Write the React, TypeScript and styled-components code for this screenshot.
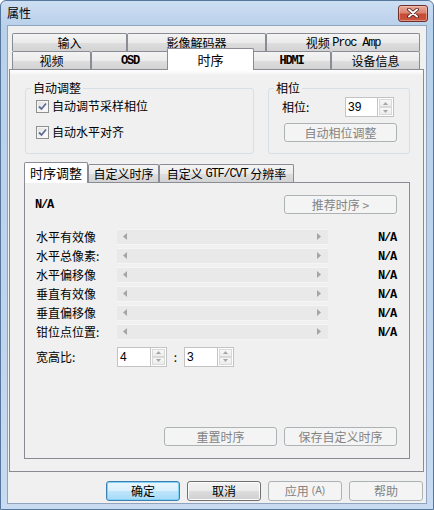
import React from 'react';
import styled, { createGlobalStyle } from 'styled-components';

const GlobalStyle = createGlobalStyle`
  html, body {
    margin: 0;
    padding: 0;
    background: #ffffff;
  }
  body {
    font-family: "Noto Sans CJK SC", "Liberation Sans", sans-serif;
    font-size: 12px;
    line-height: 14px;
    color: #000;
  }
`;

const Frame = styled.div`
  width: 434px;
  height: 510px;
  box-sizing: border-box;
  display: flex;
  flex-direction: column;
  border: 1px solid #56779d;
  border-radius: 6px 6px 0 0;
  background: linear-gradient(180deg, #cddef2 0px, #bad1ea 24px, #bed4ec 60%, #c8dbf0 100%);
  padding: 0 6px 5px;
`;

const TitleBar = styled.div`
  height: 24px;
  display: flex;
  align-items: center;
  justify-content: space-between;
  margin-right: -1px;
`;

const Title = styled.span`
  font-size: 12px;
  color: #000;
`;

const CloseButton = styled.div`
  width: 30px;
  height: 17px;
  box-sizing: border-box;
  border: 1px solid #6d2f28;
  border-radius: 3px;
  background: linear-gradient(180deg, #e8a798 0%, #d98572 45%, #c84b35 55%, #c8543c 100%);
  box-shadow: inset 0 0 0 1px rgba(255, 220, 210, 0.45);
  display: flex;
  align-items: center;
  justify-content: center;
`;

const Body = styled.div`
  flex: 1;
  display: flex;
  flex-direction: column;
  background: #f0f0f0;
  border: 1px solid #8ea4bf;
  padding: 7px 2px 0 1px;
`;

const TabStrip = styled.div`
  display: flex;
  flex-direction: column;
  padding: 0 3px;
`;

const TabRow = styled.div`
  display: flex;
  height: 18px;
`;

const Tab = styled.div<{ $w: number; $active?: boolean }>`
  position: relative;
  box-sizing: border-box;
  width: ${p => (p.$active ? p.$w + 4 : p.$w)}px;
  height: ${p => (p.$active ? 22 : 18)}px;
  margin: ${p => (p.$active ? '-3px -2px -1px -2px' : '0')};
  z-index: ${p => (p.$active ? 2 : 0)};
  border: 1px solid #898c95;
  border-bottom: none;
  border-radius: 2px 2px 0 0;
  background: ${p =>
    p.$active
      ? '#ffffff'
      : 'linear-gradient(180deg, #f4f4f4 0%, #ebebeb 50%, #dedede 51%, #d3d3d3 100%)'};
  display: flex;
  align-items: center;
  justify-content: center;
  white-space: nowrap;
  font-size: ${p => (p.$active ? 13 : 12)}px;
`;

const Mono = styled.span<{ $bold?: boolean }>`
  font-family: "Liberation Mono", "DejaVu Sans Mono", monospace;
  font-size: 12px;
  letter-spacing: -1.2px;
  font-weight: ${p => (p.$bold ? 700 : 400)};
`;

const Panel = styled.div`
  height: 403px;
  box-sizing: border-box;
  display: flex;
  flex-direction: column;
  border: 1px solid #898c95;
  background: linear-gradient(180deg, #ffffff 0px, #f8f8f8 3px, #f0f0f0 5px);
  padding: 0 13px 12px 14px;
`;

const GroupRow = styled.div`
  display: flex;
  gap: 14px;
  margin: 11px 0 0 1px;
`;

const Group = styled.fieldset<{ $w?: number }>`
  box-sizing: border-box;
  margin: 0;
  padding: 0;
  min-width: 0;
  height: 73px;
  ${p => (p.$w ? `width: ${p.$w}px;` : 'flex: 1;')}
  border: 1px solid #d5dfe5;
  border-radius: 3px;
`;

const Legend = styled.legend`
  margin-left: 5px;
  padding: 0 2px;
  line-height: 14px;
  font-size: 12px;
`;

const GroupBody = styled.div<{ $pl: number; $gap: number }>`
  display: flex;
  flex-direction: column;
  gap: ${p => p.$gap}px;
  padding: 2px 0 0 ${p => p.$pl}px;
`;

const CheckRow = styled.label`
  display: flex;
  align-items: center;
  gap: 3px;
  height: 18px;
`;

const CheckBox = styled.span`
  box-sizing: border-box;
  width: 13px;
  height: 13px;
  border: 1px solid #8e8f8f;
  background: linear-gradient(135deg, #dedede 0%, #f4f4f4 60%, #ffffff 100%);
  box-shadow: inset 0 0 0 1px #f5f5f5;
  display: flex;
  align-items: center;
  justify-content: center;
`;

const PhaseRow = styled.div`
  display: flex;
  align-items: center;
  height: 20px;
`;

const FieldLabel = styled.span<{ $w: number }>`
  width: ${p => p.$w}px;
  flex: none;
  white-space: nowrap;
`;

const Spin = styled.div<{ $w: number }>`
  display: flex;
  width: ${p => p.$w}px;
  height: 20px;
  flex: none;
`;

const SpinInput = styled.div`
  flex: 1;
  box-sizing: border-box;
  border: 1px solid #c3c3c3;
  border-right: none;
  background: #ffffff;
  padding: 2px 0 0 2px;
  font-family: "Liberation Sans", Arial, sans-serif;
  font-size: 12px;
`;

const SpinArrows = styled.div`
  width: 17px;
  display: flex;
  flex-direction: column;
  box-sizing: border-box;
  border: 1px solid #c3c3c3;
  background: #ffffff;
  padding: 1px;
`;

const SpinArrow = styled.div`
  flex: 1;
  box-sizing: border-box;
  border: 1px solid #d9d9d9;
  background: linear-gradient(180deg, #f7f7f7, #ececec);
  display: flex;
  align-items: center;
  justify-content: center;
`;

const Button = styled.div<{ $w: number; $h: number; $kind?: 'default' | 'normal' | 'disabled'; $ml?: number }>`
  box-sizing: border-box;
  width: ${p => p.$w}px;
  height: ${p => p.$h}px;
  margin-left: ${p => p.$ml ?? 0}px;
  flex: none;
  border-radius: 3px;
  display: flex;
  align-items: center;
  justify-content: center;
  white-space: nowrap;
  ${p =>
    p.$kind === 'default'
      ? `border: 1px solid #3c7fb1;
         background: linear-gradient(180deg, #eaf6fd 0%, #d9f0fc 50%, #bee6fd 51%, #a7d9f5 100%);
         box-shadow: inset 0 0 0 1px #7fd3f7;
         color: #000;`
      : p.$kind === 'normal'
      ? `border: 1px solid #707070;
         background: linear-gradient(180deg, #f2f2f2 0%, #ebebeb 50%, #dddddd 51%, #cfcfcf 100%);
         box-shadow: inset 0 0 0 1px #fcfcfc;
         color: #000;`
      : `border: 1px solid #adb2b5;
         background: #f4f4f4;
         color: #838383;`}
`;

const Small = styled.span`
  font-family: "Liberation Sans", Arial, sans-serif;
  font-size: 10px;
  margin-left: 3px;
`;

const SubTabRow = styled.div`
  display: flex;
  height: 18px;
  margin-top: 10px;
`;

const SubTab = styled.div<{ $w: number; $active?: boolean }>`
  position: relative;
  box-sizing: border-box;
  width: ${p => p.$w}px;
  height: ${p => (p.$active ? 21 : 18)}px;
  margin-top: ${p => (p.$active ? -2 : 0)}px;
  z-index: ${p => (p.$active ? 2 : 0)};
  border: 1px solid #898c95;
  border-bottom: none;
  border-radius: 2px 2px 0 0;
  background: ${p =>
    p.$active
      ? '#ffffff'
      : 'linear-gradient(180deg, #f4f4f4 0%, #ebebeb 50%, #dedede 51%, #d3d3d3 100%)'};
  display: flex;
  align-items: center;
  justify-content: center;
  white-space: nowrap;
  font-size: ${p => (p.$active ? 13 : 12)}px;
`;

const SubPanel = styled.div`
  height: 277px;
  box-sizing: border-box;
  display: flex;
  flex-direction: column;
  border: 1px solid #898c95;
  background: #f0f0f0;
  padding: 12px 12px 12px 10px;
`;

const InfoRow = styled.div`
  display: flex;
  align-items: center;
  justify-content: space-between;
  height: 19px;
`;

const SliderList = styled.div`
  display: flex;
  flex-direction: column;
  margin-top: 13px;
`;

const SliderRow = styled.div`
  display: grid;
  grid-template-columns: 81px 211px 1fr;
  align-items: center;
  height: 19px;
  padding: 0 1px;
`;

const Track = styled.div`
  height: 16px;
  box-sizing: border-box;
  background: #e9e9e9;
  border-top: 1px solid #f5f5f5;
  border-bottom: 1px solid #f5f5f5;
  display: flex;
  align-items: center;
  justify-content: space-between;
  padding: 0 7px 0 6px;
`;

const Value = styled.span`
  justify-self: end;
`;

const AspectRow = styled.div`
  display: flex;
  align-items: center;
  height: 21px;
  margin-top: 5px;
  padding-left: 1px;
`;

const Colon = styled.span`
  width: 17px;
  text-align: center;
  flex: none;
`;

const SubButtons = styled.div`
  display: flex;
  justify-content: flex-end;
  gap: 7px;
  margin-top: auto;
`;

const ButtonBar = styled.div`
  display: flex;
  justify-content: flex-end;
  gap: 7px;
  margin-top: 9px;
  padding-right: 1px;
`;

const Check = () => (
  <svg width="9" height="9" viewBox="0 0 9 9">
    <path d="M1 4.5 L3.5 7 L8 1.5" fill="none" stroke="#5d6f92" strokeWidth="1.8" />
  </svg>
);

const Tri = ({ dir }: { dir: 'up' | 'down' | 'left' | 'right' }) => {
  const d = {
    up: 'M0 3 L2.5 0 L5 3 Z',
    down: 'M0 0 L2.5 3 L5 0 Z',
    left: 'M4 0 L0 3.5 L4 7 Z',
    right: 'M0 0 L4 3.5 L0 7 Z',
  }[dir];
  const vertical = dir === 'up' || dir === 'down';
  return (
    <svg width={vertical ? 5 : 4} height={vertical ? 3 : 7} viewBox={vertical ? '0 0 5 3' : '0 0 4 7'}>
      <path d={d} fill="#a5a5a5" />
    </svg>
  );
};

const SpinBox = ({ value, width }: { value: string; width: number }) => (
  <Spin $w={width}>
    <SpinInput>{value}</SpinInput>
    <SpinArrows>
      <SpinArrow>
        <Tri dir="up" />
      </SpinArrow>
      <SpinArrow>
        <Tri dir="down" />
      </SpinArrow>
    </SpinArrows>
  </Spin>
);

const sliders = ['水平有效像', '水平总像素:', '水平偏移像', '垂直有效像', '垂直偏移像', '钳位点位置:'];

export default function App() {
  return (
    <>
      <GlobalStyle />
      <Frame>
        <TitleBar>
          <Title>属性</Title>
          <CloseButton>
            <svg width="12" height="10" viewBox="0 0 12 10">
              <path d="M2 1.5 L10 8.5 M10 1.5 L2 8.5" stroke="#4a1a14" strokeWidth="3.6" strokeLinecap="round" />
              <path d="M2 1.5 L10 8.5 M10 1.5 L2 8.5" stroke="#ffffff" strokeWidth="2" strokeLinecap="round" />
            </svg>
          </CloseButton>
        </TitleBar>
        <Body>
          <TabStrip>
            <TabRow>
              <Tab $w={115}>输入</Tab>
              <Tab $w={139}>影像解码器</Tab>
              <Tab $w={154}>
                视频&nbsp;<Mono>Proc Amp</Mono>
              </Tab>
            </TabRow>
            <TabRow>
              <Tab $w={79}>视频</Tab>
              <Tab $w={78}>
                <Mono $bold>OSD</Mono>
              </Tab>
              <Tab $w={83} $active>
                时序
              </Tab>
              <Tab $w={79}>
                <Mono $bold>HDMI</Mono>
              </Tab>
              <Tab $w={89}>设备信息</Tab>
            </TabRow>
          </TabStrip>
          <Panel>
            <GroupRow>
              <Group $w={229}>
                <Legend>自动调整</Legend>
                <GroupBody $pl={10} $gap={8}>
                  <CheckRow>
                    <CheckBox>
                      <Check />
                    </CheckBox>
                    自动调节采样相位
                  </CheckRow>
                  <CheckRow>
                    <CheckBox>
                      <Check />
                    </CheckBox>
                    自动水平对齐
                  </CheckRow>
                </GroupBody>
              </Group>
              <Group>
                <Legend>相位</Legend>
                <GroupBody $pl={13} $gap={6}>
                  <PhaseRow>
                    <FieldLabel $w={63}>相位:</FieldLabel>
                    <SpinBox value="39" width={49} />
                  </PhaseRow>
                  <Button $w={113} $h={19} $kind="disabled" $ml={2}>
                    自动相位调整
                  </Button>
                </GroupBody>
              </Group>
            </GroupRow>

            <SubTabRow>
              <SubTab $w={64} $active>
                时序调整
              </SubTab>
              <SubTab $w={71}>自定义时序</SubTab>
              <SubTab $w={135}>
                自定义&nbsp;<Mono>GTF/CVT</Mono>&nbsp;分辨率
              </SubTab>
            </SubTabRow>
            <SubPanel>
              <InfoRow>
                <Mono $bold>N/A</Mono>
                <Button $w={113} $h={19} $kind="disabled">
                  推荐时序 &gt;
                </Button>
              </InfoRow>
              <SliderList>
                {sliders.map(label => (
                  <SliderRow key={label}>
                    <span>{label}</span>
                    <Track>
                      <Tri dir="left" />
                      <Tri dir="right" />
                    </Track>
                    <Value>
                      <Mono $bold>N/A</Mono>
                    </Value>
                  </SliderRow>
                ))}
              </SliderList>
              <AspectRow>
                <FieldLabel $w={81}>宽高比:</FieldLabel>
                <SpinBox value="4" width={50} />
                <Colon>:</Colon>
                <SpinBox value="3" width={50} />
              </AspectRow>
              <SubButtons>
                <Button $w={113} $h={19} $kind="disabled">
                  重置时序
                </Button>
                <Button $w={113} $h={19} $kind="disabled">
                  保存自定义时序
                </Button>
              </SubButtons>
            </SubPanel>
          </Panel>
          <ButtonBar>
            <Button $w={74} $h={20} $kind="default">
              确定
            </Button>
            <Button $w={74} $h={20} $kind="normal">
              取消
            </Button>
            <Button $w={74} $h={20} $kind="disabled">
              应用<Small>(A)</Small>
            </Button>
            <Button $w={74} $h={20} $kind="disabled">
              帮助
            </Button>
          </ButtonBar>
        </Body>
      </Frame>
    </>
  );
}
